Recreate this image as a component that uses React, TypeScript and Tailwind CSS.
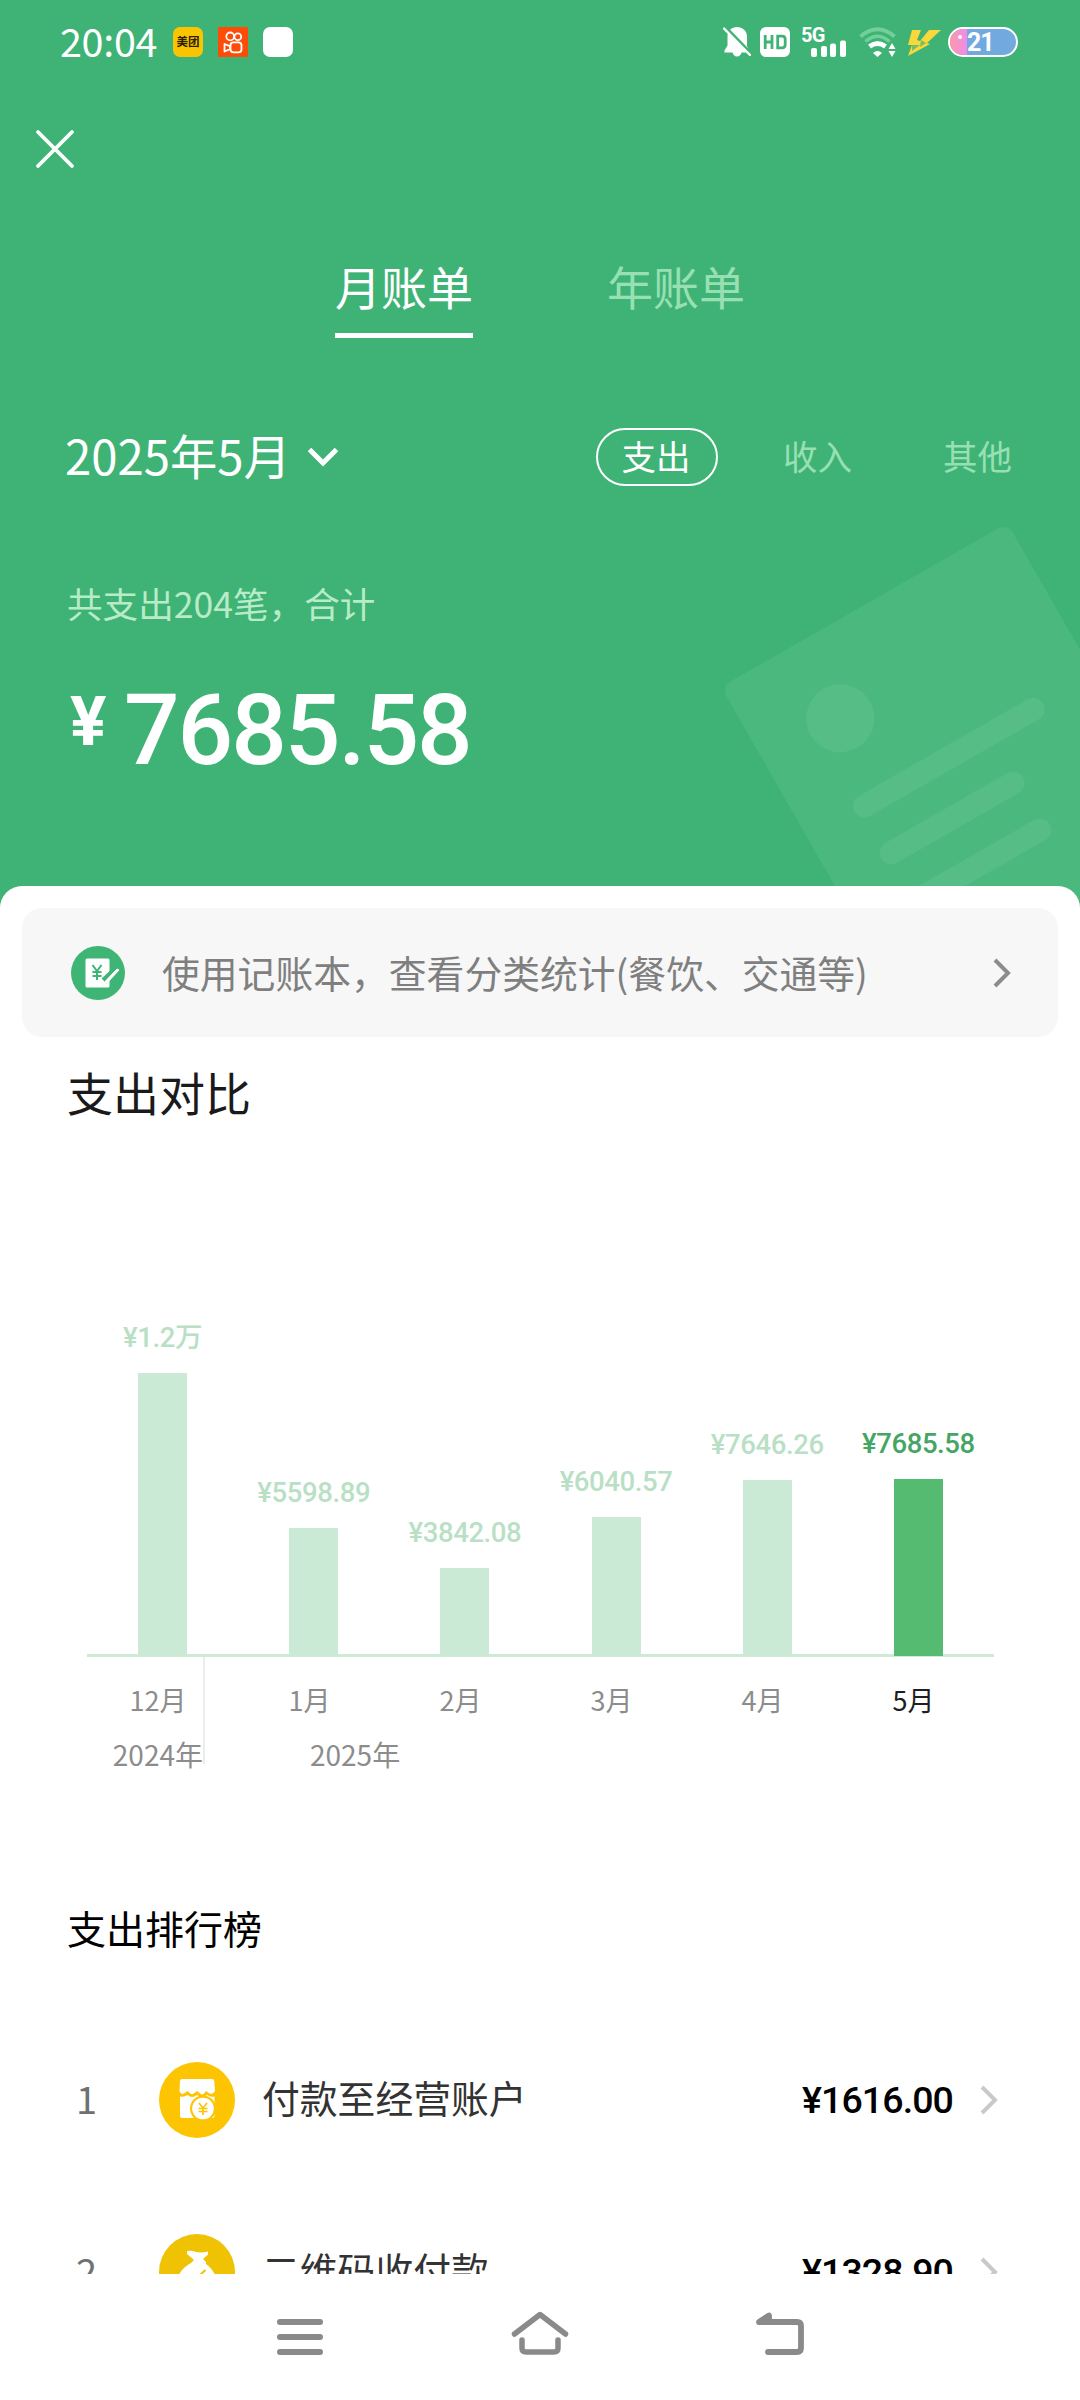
import clsx from 'clsx'

type MonthStat = { month: string; value: string; height: number; current?: boolean }
type RankItem = { rank: number; name: string; amount: string; icon: 'shop' | 'bag' }

const STATS: MonthStat[] = [
  { month: '12月', value: '¥1.2万', height: 283 },
  { month: '1月', value: '¥5598.89', height: 128 },
  { month: '2月', value: '¥3842.08', height: 88 },
  { month: '3月', value: '¥6040.57', height: 139 },
  { month: '4月', value: '¥7646.26', height: 176 },
  { month: '5月', value: '¥7685.58', height: 177, current: true },
]

const RANKING: RankItem[] = [
  { rank: 1, name: '付款至经营账户', amount: '¥1616.00', icon: 'shop' },
  { rank: 2, name: '二维码收付款', amount: '¥1328.90', icon: 'bag' },
]

function StatusBar() {
  return (
    <div className="flex h-[84px] shrink-0 items-center pl-[60px] pr-[62px]">
      <span className="w-[113px] pb-[4px] text-[39.5px] leading-[50px] tracking-[-0.3px] text-white">20:04</span>
      <span className="flex size-[30px] items-center justify-center rounded-[7px] bg-[#fbc400] text-[11.5px] leading-none font-bold text-[#2b2000]">
        美团
      </span>
      <svg className="ml-[15px] size-[30px] bg-[#fd4b08]" viewBox="0 0 30 30" fill="none" stroke="#fff" strokeWidth="1.8">
        <circle cx="12.2" cy="9.4" r="3.9" />
        <circle cx="19.8" cy="9.8" r="3.4" />
        <rect x="12.5" y="15.3" width="11" height="10" rx="3" />
        <path d="M6.5 17v7.5l5.5-2.3v-3z" strokeLinejoin="round" />
      </svg>
      <span className="ml-[15px] size-[30px] rounded-[7px] bg-white" />

      <div className="ml-auto flex items-center">
        <svg className="h-[32px] w-[28px]" viewBox="0 0 28 32">
          <path d="M14 1C8.500 1 4.500 5 4.500 10.500v9l-3 5v2H9.500c.6 2.300 2 4 4.500 4s4-1.700 4.500-4H26v-2l-2-4.500V10C24 5 19.500 1 14 1z" fill="#fff" />
          <path d="M1 -0.500l27 28" stroke="#3eb375" strokeWidth="3" />
          <path d="M1 2.500l26 26.500" stroke="#fff" strokeWidth="2.400" strokeLinecap="round" />
        </svg>
        <svg className="ml-[9px] size-[30px]" viewBox="0 0 30 30">
          <rect width="30" height="30" rx="6" fill="#fff" />
          <path d="M5.200 8v14M5.200 15h6.800M12 8v14M17.700 9.200v11.600h4.500q3 0 3-3v-5.600q0-3-3-3z" fill="none" stroke="#3eb375" strokeWidth="2.800" />
        </svg>
        <div className="relative ml-[11px] h-[32px] w-[46px]">
          <span className="absolute top-0 left-0 font-['Roboto',sans-serif] text-[20px] leading-[18px] font-bold tracking-[-0.8px] text-white">5G</span>
          <svg className="absolute inset-0" viewBox="0 0 46 32" fill="#fff">
            <rect x="10" y="22" width="6" height="9" rx="2" />
            <rect x="20" y="20" width="6" height="11" rx="2" />
            <rect x="29" y="17.500" width="6" height="13.500" rx="2" />
            <rect x="39" y="14.500" width="6" height="16.500" rx="2" />
          </svg>
        </div>
        <svg className="ml-[12px] h-[32px] w-[37px]" viewBox="0 0 37 32" fill="none">
          <path d="M1.500 10.500Q18.500-4 35.500 10.500" stroke="#72cf98" strokeWidth="4" />
          <path d="M6.500 15.500Q18.500 5 30.500 15.500" stroke="#72cf98" strokeWidth="3.600" />
          <path d="M10.500 20.500Q18.500 14.500 26.500 20.500" stroke="#fff" strokeWidth="4.800" />
          <path d="M14 27q4.500-4 9 0l-4.500 4z" fill="#fff" />
          <path d="M29.500 23l3.500-6 3.500 6zM29.500 25h7l-3.500 6z" fill="#fff" />
        </svg>
        <svg className="ml-[11px] h-[30px] w-[35px]" viewBox="0 0 35 30">
          <path d="M5 3h9l-4 10 3 1L22 3h12L20 16l3 1L1 29l4-11H1z" fill="#f9d83c" />
          <path d="M5 18l8 0-8 6zM14 13l5 3-6 4z" fill="#3eb375" opacity=".7" />
        </svg>
        <div className="ml-[6px] flex h-[30px] w-[70px] items-center overflow-hidden rounded-full border-2 border-white bg-[#72a9de]">
          <div className="relative flex h-full w-[17px] bg-gradient-to-r from-[#fb9aa4] to-[#f08ae8]">
            <span className="absolute top-[6px] left-[8px] size-[4px] rounded-full bg-white" />
          </div>
          <span className="font-['Roboto',sans-serif] text-[25px] leading-none font-bold tracking-[-1px] text-white">21</span>
        </div>
      </div>
    </div>
  )
}

function Watermark() {
  return (
    <svg className="absolute top-[500px] left-[700px] h-[410px] w-[380px]" viewBox="700 500 380 410">
      <g transform="translate(721 687) rotate(-29.8)" fill="#fff" fillOpacity=".07">
        <rect width="330" height="460" rx="11" />
        <circle cx="88" cy="86.500" r="34" />
        <rect x="54" y="163" width="217" height="23" rx="11.500" />
        <rect x="54" y="217" width="163" height="23" rx="11.500" />
        <rect x="54" y="271" width="163" height="23" rx="11.500" />
      </g>
    </svg>
  )
}

function Header() {
  return (
    <>
      <div className="flex h-[130px] shrink-0 items-center pl-[35px]">
        <svg className="size-[40px]" viewBox="0 0 40 40" stroke="#fff" strokeWidth="3.800" strokeLinecap="round">
          <path d="M3 3l34 34M37 3L3 37" />
        </svg>
      </div>
      <div className="flex justify-center gap-[134px] pt-[41px] text-[46px] leading-[60px]">
        <div className="border-b-[5px] border-white pb-[18px] text-white">月账单</div>
        <div className="text-[#98e0b3]">年账单</div>
      </div>

      <div className="mt-[90px] flex h-[58px] items-center pr-[68px] pl-[65px]">
        <div className="flex items-center text-white">
          <span className="pb-[5px] text-[47.3px] leading-[50px]">2025年5月</span>
          <svg className="ml-[16px] h-[22px] w-[32px]" viewBox="0 0 32 22" fill="none" stroke="#fff" strokeWidth="5">
            <path d="M2.500 3.500L16 17 29.500 3.500" />
          </svg>
        </div>
        <div className="ml-auto flex items-center text-[34.5px] leading-[50px] text-[#98e0b3]">
          <span className="flex h-[58px] w-[122px] items-center justify-center rounded-full border-2 border-white pr-[2px] pb-[4px] text-white">支出</span>
          <span className="ml-[65px] pb-[4px]">收入</span>
          <span className="ml-[91px] pb-[4px]">其他</span>
        </div>
      </div>

      <div className="mt-[92px] pl-[67px] text-[35.6px] leading-[50px] text-[#b8ebc8]">共支出204笔，合计</div>
      <div className="mt-[49px] flex h-[100px] items-center pl-[70px] font-['Roboto',sans-serif] font-medium text-white">
        <span className="w-[54px] pb-[10px] text-[68px] leading-[70px] font-bold">¥</span>
        <span className="pt-[7px] text-[98px] leading-[98px] tracking-[-2.1px]">7685.58</span>
      </div>
    </>
  )
}

function NoticeCard() {
  return (
    <div className="mx-[22px] flex h-[129px] shrink-0 items-center rounded-[20px] bg-[#f7f7f7] pr-[45px] pl-[48px]">
      <svg className="size-[56px]" viewBox="0 0 56 56">
        <circle cx="28" cy="28" r="27" fill="#3eb575" />
        <path d="M17 13.500h21q1.500 0 1.500 1.500v26q0 1.500-1.500 1.500H17q-1.500 0-1.500-1.500V15q0-1.500 1.500-1.500z" fill="#fff" />
        <path d="M49 22L34 36" stroke="#3eb575" strokeWidth="7" fill="none" />
        <path d="M47 24L36 35.500l-2 3.500 4-2L49 25z" fill="#fff" stroke="#fff" />
        <path d="M22.500 20l4.500 6 4.500-6M27 26v9M22.500 27h9M22.500 31h9" stroke="#3eb575" strokeWidth="2" fill="none" />
      </svg>
      <span className="ml-[36px] pb-[2px] text-[37.8px] leading-[50px] whitespace-nowrap text-[#7f7f7f]">使用记账本，查看分类统计(餐饮、交通等)</span>
      <Chevron className="ml-auto text-[#8c8c8c]" />
    </div>
  )
}

function Chevron({ className }: { className?: string }) {
  return (
    <svg className={clsx('h-[32px] w-[22px] shrink-0', className)} viewBox="0 0 22 32" fill="none" stroke="currentColor" strokeWidth="4">
      <path d="M4 3l13 13L4 29" />
    </svg>
  )
}

function CompareChart() {
  const [first, ...rest] = STATS
  return (
    <div className="mr-[86px] ml-[87px] shrink-0 text-[28px] leading-[40px] text-[#8c8c8c]">
      <div className="grid h-[535px] grid-cols-6 items-end">
        {STATS.map((s) => (
          <div key={s.month} className="flex flex-col items-center">
            <span
              className={clsx(
                "mb-[15px] font-['Roboto','Noto_Sans_CJK_SC',sans-serif] text-[27.5px] leading-[40px] font-medium tracking-[-0.4px] whitespace-nowrap",
                s.current ? 'text-[#45a564]' : 'text-[#b9dfc5]'
              )}
            >
              {s.value}
            </span>
            <div className={clsx('w-[49px]', s.current ? 'bg-[#55bb70]' : 'bg-[#cbead6]')} style={{ height: s.height }} />
          </div>
        ))}
      </div>
      <div className="-mt-[2px] h-[3px] bg-[#55bb70]/30" />

      <div className="flex">
        <div className="h-[107px] w-[118px] border-r-2 border-[#ececec] pt-[23px]">
          <div className="pl-[26px] text-center text-[27px]">{first.month}</div>
          <div className="mt-[14px] text-right">2024年</div>
        </div>
        <div className="ml-[29px] pt-[23px]">
          <div className="flex text-[27px]">
            {rest.map((s) => (
              <div key={s.month} className={clsx('w-[151px] text-center', s.current && 'text-[#1f1f1f]')}>
                {s.month}
              </div>
            ))}
          </div>
          <div className="mt-[14px] pl-[76px]">2025年</div>
        </div>
      </div>
    </div>
  )
}

function RankIcon({ icon }: { icon: RankItem['icon'] }) {
  if (icon === 'shop') {
    return (
      <svg className="size-[76px]" viewBox="0 0 76 76">
        <circle cx="38" cy="38" r="38" fill="#fdc402" />
        <path d="M23 17h30q2 0 2.300 2l.7 10q-3 5-7 1.500-1-1-2-1.500-3.500 6-7 1.500l-2-1.500-2 1.500q-4 4-7-1.500-1.500.5-2.500 1.500Q22 34 20.500 29l.5-10q.3-2 2-2z" fill="#fff" />
        <path d="M21 34.500q4 1 7.500-1.500 4.500 4 9.500 0 5 4 10 0 3.500 2.500 7.500 1.500V54q0 2-2 2H23q-2 0-2-2z" fill="#fff" />
        <circle cx="44" cy="46.500" r="13" fill="#fdc402" />
        <circle cx="44" cy="46.500" r="10.800" fill="#fff" />
        <path d="M40 41l4 5 4-5M44 46v7M39.500 46.500h9M39.500 49.500h9" stroke="#fdc402" strokeWidth="1.700" fill="none" />
      </svg>
    )
  }
  return (
    <svg className="size-[76px]" viewBox="0 0 76 76">
      <circle cx="38" cy="38" r="38" fill="#efc203" />
      <path d="M28 17q4-1 9 1 6 1 12-.5v3L44 25l3 3v2q8 6 10 14 1 14-10 15H28q-11-1-9-15 2-9 13-15l3-3-7-6z" fill="#fff" />
      <path d="M37.500 44l9-8" stroke="#efc203" strokeWidth="2" />
    </svg>
  )
}

function RankRow({ item }: { item: RankItem }) {
  return (
    <div className="flex h-[172px] items-center pr-[80px] pl-[76px]">
      <span className="w-[83px] pb-[4px] text-[38px] leading-[50px] text-[#707070]">{item.rank}</span>
      <RankIcon icon={item.icon} />
      <span className="ml-[27px] pb-[6px] text-[37.8px] leading-[50px] text-[#333]">{item.name}</span>
      <span className="ml-auto font-['Roboto',sans-serif] text-[37.5px] leading-[50px] font-medium tracking-[-0.9px] text-black">{item.amount}</span>
      <Chevron className="ml-[25px] text-[#c9c9c9]" />
    </div>
  )
}

function NavBar() {
  return (
    <nav className="flex h-[126px] shrink-0 items-start justify-center gap-[180px] bg-white pt-[30px]">
      <svg className="size-[60px]" viewBox="270 2304 60 60" stroke="#8a8a8a" strokeWidth="6" strokeLinecap="round">
        <path d="M280 2322h40M280 2337h40M280 2352h40" />
      </svg>
      <svg className="size-[60px]" viewBox="510 2304 60 60" fill="none" stroke="#8a8a8a" strokeWidth="5.500" strokeLinecap="round" strokeLinejoin="round">
        <path d="M514.500 2334l25.500-19.500 25.500 19.500M522 2340v8q0 4 4 4h28q4 0 4-4v-8" />
      </svg>
      <svg className="size-[60px]" viewBox="750 2304 60 60" fill="none" stroke="#8a8a8a" strokeWidth="5.800" strokeLinecap="round" strokeLinejoin="round">
        <path d="M768 2352h29q4 0 4-4v-22q0-4-4-4h-38l10-6.500v5" />
      </svg>
    </nav>
  )
}

export default function App() {
  return (
    <div className="relative flex h-[2400px] w-[1080px] flex-col overflow-hidden bg-[#3eb375] font-['Noto_Sans_CJK_SC',sans-serif]">
      <Watermark />
      <div className="flex h-[886px] shrink-0 flex-col">
        <StatusBar />
        <Header />
      </div>

      <main className="relative flex h-[1388px] shrink-0 flex-col overflow-hidden rounded-t-[22px] bg-white pt-[22px]">
        <NoticeCard />
        <h2 className="mt-[24px] shrink-0 pl-[67px] text-[46px] leading-[60px] text-[#1a1a1a]">支出对比</h2>
        <CompareChart />
        <h3 className="mt-[128px] shrink-0 pl-[67px] text-[39px] leading-[50px] text-black">支出排行榜</h3>
        <div className="mt-[62px] shrink-0">
          {RANKING.map((item) => (
            <RankRow key={item.rank} item={item} />
          ))}
        </div>
      </main>
      <NavBar />
    </div>
  )
}
